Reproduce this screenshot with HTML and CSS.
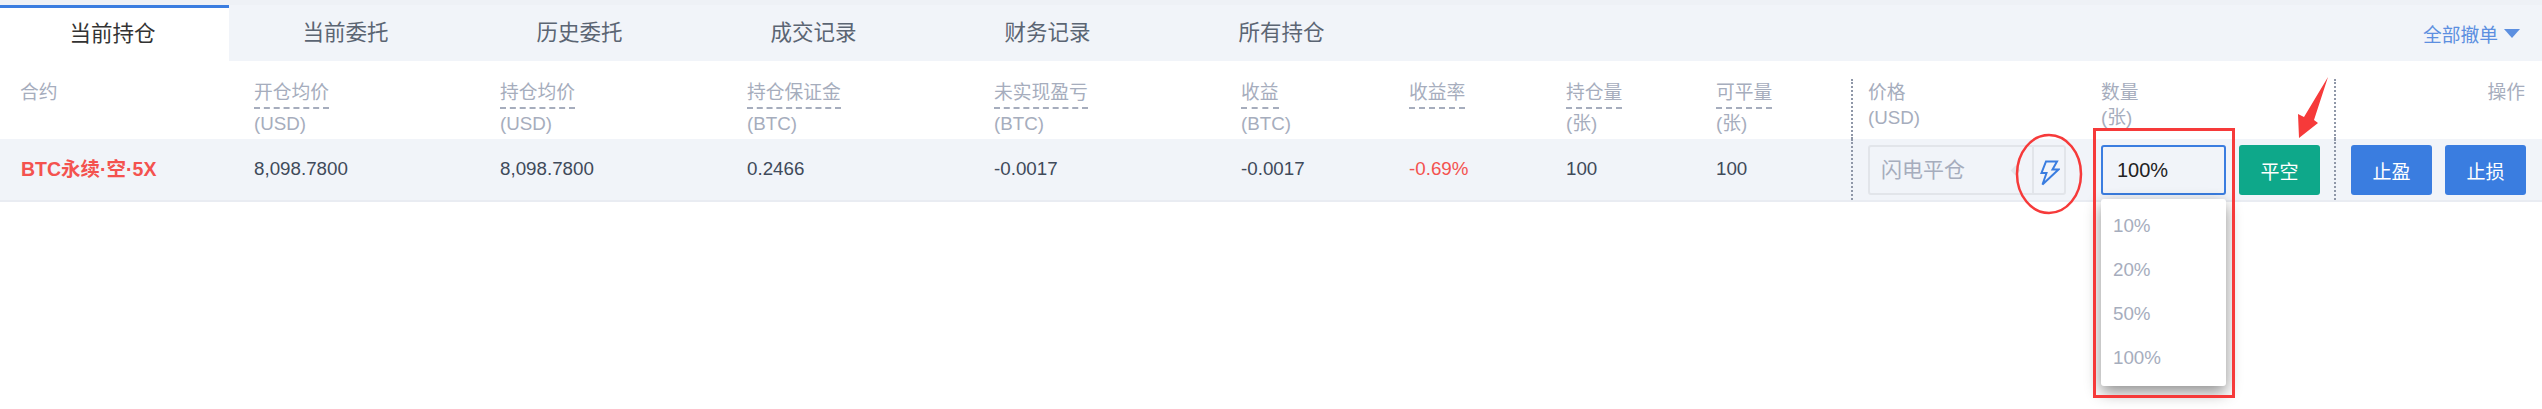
FILE: index.html

```html
<!DOCTYPE html>
<html>

<head>
    <title>当前持仓</title>
    <link rel="stylesheet" href="styles.css">
</head>

<body>
    <div class="panel">
        <!-- Tabs -->
        <div class="tabs">
            <div class="tab active">当前持仓</div>
            <div class="tab">当前委托</div>
            <div class="tab">历史委托</div>
            <div class="tab">成交记录</div>
            <div class="tab">财务记录</div>
            <div class="tab">所有持仓</div>
            <div class="cancel-all">全部撤单<span class="caret"></span></div>
        </div>

        <!-- Table header -->
        <div class="row head">
            <div class="cell"><span class="label plain">合约</span></div>
            <div class="cell"><span class="label">开仓均价</span><span>(USD)</span></div>
            <div class="cell"><span class="label">持仓均价</span><span>(USD)</span></div>
            <div class="cell"><span class="label">持仓保证金</span><span>(BTC)</span></div>
            <div class="cell"><span class="label">未实现盈亏</span><span>(BTC)</span></div>
            <div class="cell"><span class="label">收益</span><span>(BTC)</span></div>
            <div class="cell"><span class="label">收益率</span></div>
            <div class="cell"><span class="label">持仓量</span><span>(张)</span></div>
            <div class="cell"><span class="label">可平量</span><span>(张)</span></div>
            <div class="cell split price-head"><span class="label plain">价格</span><span>(USD)</span></div>
            <div class="cell qty-head"><span class="label plain">数量</span><span>(张)</span></div>
            <div class="cell split ops-head"><span class="label plain">操作</span></div>
        </div>

        <!-- Position row -->
        <div class="row body">
            <div class="cell symbol">BTC永续·空·5X</div>
            <div class="cell">8,098.7800</div>
            <div class="cell">8,098.7800</div>
            <div class="cell">0.2466</div>
            <div class="cell">-0.0017</div>
            <div class="cell">-0.0017</div>
            <div class="cell loss">-0.69%</div>
            <div class="cell">100</div>
            <div class="cell">100</div>
            <div class="cell split price-cell">
                <div class="flash-box">
                    <div class="flash-text">闪电平仓<span class="diamond"></span></div>
                    <div class="flash-icon">
                        <svg width="20" height="26" viewBox="0 0 20 26">
                            <path d="M6 1.5 H17 L12.5 9.5 H18.5 L2.5 24.5 L6.5 13 H1.5 Z" fill="none" stroke="#3a7de0" stroke-width="2" stroke-linejoin="miter"/>
                        </svg>
                    </div>
                </div>
            </div>
            <div class="cell qty-cell">
                <div class="qty-input">100%</div>
                <button class="btn close-btn">平空</button>
                <ul class="qty-menu">
                    <li>10%</li>
                    <li>20%</li>
                    <li>50%</li>
                    <li>100%</li>
                </ul>
            </div>
            <div class="cell split ops-cell">
                <button class="btn">止盈</button>
                <button class="btn">止损</button>
            </div>
        </div>

        <!-- Red marks drawn on the screenshot -->
        <svg class="marks" width="2542" height="409" viewBox="0 0 2542 409">
            <ellipse cx="2049" cy="174" rx="32" ry="39" fill="none" stroke="#f63a3a" stroke-width="2.5"/>
            <rect x="2094.5" y="129.5" width="139" height="267" fill="none" stroke="#f63a3a" stroke-width="3"/>
            <polygon points="2328,77 2314,120 2318,123 2299,138 2298,114 2304,117" fill="#f63a3a"/>
        </svg>
    </div>
</body>

</html>
```

FILE: styles.css

```css
/* Basic styling for the body */
body {
    margin: 0;
    background-color: #fff;
    font-family: "Liberation Sans", "Noto Sans CJK SC", sans-serif;
    font-size: 18.75px;
    color: #3f4a5a;
}

.panel {
    position: relative;
    height: 409px;
    overflow: hidden;
}

/* Styling for the tabs */
.tabs {
    display: flex;
    height: 56px;
    margin-top: 5px;
    background-color: #f1f4f9;
    box-shadow: 0 -5px 0 #eef1f6;
}

.tab {
    width: 234px;
    padding-right: 1px;
    box-sizing: border-box;
    font-size: 21.5px;
    line-height: 56px;
    text-align: center;
    color: #5b6573;
}

.tab.active {
    width: 229px;
    padding-right: 4px;
    background-color: #fff;
    border-top: 3px solid #3a7de0;
    line-height: 53px;
    color: #333;
}

.cancel-all {
    display: flex;
    align-items: center;
    gap: 6px;
    margin-left: auto;
    padding-right: 22px;
    font-size: 18.75px;
    color: #5c8fe0;
}

.caret {
    width: 0;
    height: 0;
    border-left: 8px solid transparent;
    border-right: 8px solid transparent;
    border-top: 9px solid #5c8fe0;
}

/* Styling for the table rows */
.row {
    display: grid;
    grid-template-columns: 234px 246px 247px 247px 247px 168px 157px 150px 135px 250px 233px 208px;
    padding-left: 20px;
}

.head {
    height: 78px;
    box-sizing: border-box;
    padding-top: 18px;
    color: #a6adbd;
    line-height: 29px;
}

.head .cell {
    display: flex;
    flex-direction: column;
    align-items: flex-start;
}

.label {
    line-height: 28px;
    border-bottom: 2px dashed #a6adbd;
}

/* The labels without a dashed line sit closer to their unit */
.label.plain {
    margin-bottom: -4px;
    border-bottom: none;
}

.body {
    height: 61px;
    background-color: #f1f4f9;
    border-bottom: 2px solid #e9ecf2;
    line-height: 60px;
}

.symbol {
    padding-left: 1px;
    font-size: 19.5px;
    font-weight: bold;
    color: #f4524f;
}

.loss {
    color: #f4524f;
}

/* Dotted lines around the price and action columns */
.split {
    border-left: 2px dotted #8f97a8;
}

.price-head,
.price-cell {
    padding-left: 15px;
}

.head .ops-head {
    align-items: flex-end;
    padding-right: 17px;
}

.flash-box {
    display: flex;
    width: 198px;
    height: 50px;
    margin-top: 6px;
    box-sizing: border-box;
    border: 2px solid #e2e5ea;
    border-radius: 3px;
    color: #a6adbd;
}

.flash-text {
    display: flex;
    align-items: center;
    width: 164px;
    padding-left: 11px;
    box-sizing: border-box;
    border-right: 2px solid #e2e5ea;
    font-size: 21px;
    line-height: 46px;
}

.diamond {
    width: 7px;
    height: 7px;
    margin-left: 47px;
    background-color: #e2e5ea;
    transform: rotate(45deg);
}

.flash-icon {
    display: flex;
    flex: 1;
    align-items: center;
    justify-content: center;
    padding: 6px 0 0 2px;
}

/* Styling for the quantity input and its menu */
.qty-cell {
    display: flex;
    align-items: flex-start;
    gap: 13px;
    position: relative;
}

.qty-input {
    width: 125px;
    height: 50px;
    margin-top: 6px;
    padding-left: 14px;
    box-sizing: border-box;
    border: 2px solid #3a7de0;
    border-radius: 3px;
    font-size: 20px;
    line-height: 46px;
    color: #222;
}

.qty-menu {
    position: absolute;
    top: 60px;
    left: 0;
    width: 125px;
    height: 187px;
    margin: 0;
    padding: 5px 0 0 12px;
    box-sizing: border-box;
    list-style: none;
    background-color: #fff;
    border-radius: 3px;
    box-shadow: 0 6px 16px rgba(0, 0, 0, 0.45);
    color: #a6adbd;
    line-height: 44px;
}

/* Styling for buttons */
.btn {
    width: 81px;
    height: 50px;
    margin-top: 6px;
    padding: 0;
    border: none;
    border-radius: 3px;
    background-color: #3a7de0;
    color: #fff;
    font-family: inherit;
    font-size: 19px;
}

.close-btn {
    background-color: #0ea88a;
}

.ops-cell {
    display: flex;
    align-items: flex-start;
    gap: 13px;
    padding-left: 15px;
}

.marks {
    position: absolute;
    top: 0;
    left: 0;
    pointer-events: none;
}
```
